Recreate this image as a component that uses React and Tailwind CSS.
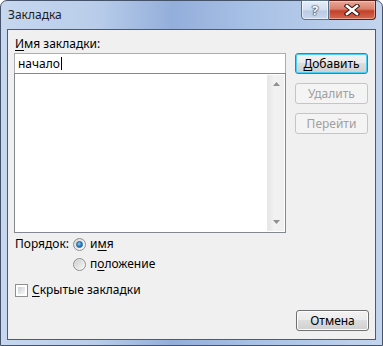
import React from "react";

const font = { fontFamily: '"Noto Sans", "Open Sans", sans-serif' };

function Btn({ children, disabled, primary, className = "" }) {
  let cls =
    "h-[21px] w-[73px] rounded-[3px] border flex items-center justify-center text-[12px] leading-none ";
  if (primary) {
    cls +=
      "border-[#3c7fb1] bg-[linear-gradient(#f2f2f2_0%,#ebebeb_45%,#dddddd_50%,#cfcfcf_100%)] text-black shadow-[inset_0_0_0_1px_#48d0f8]";
  } else if (disabled) {
    cls += "border-[#c5c5c5] bg-[#f4f4f4] text-[#a0a0a0]";
  } else {
    cls +=
      "border-[#707070] bg-[linear-gradient(#f2f2f2_0%,#ebebeb_45%,#dddddd_50%,#cfcfcf_100%)] text-black shadow-[inset_0_0_0_1px_#fcfcfc]";
  }
  return <div className={cls + " " + className}>{children}</div>;
}

function Radio({ checked }) {
  return (
    <div className="w-[13px] h-[13px] rounded-full border border-[#8e8f8f] bg-[linear-gradient(135deg,#d6d6d6,#fefefe)] flex items-center justify-center">
      {checked ? (
        <div className="w-[7px] h-[7px] rounded-full bg-[radial-gradient(circle_at_40%_35%,#8ad2f6_0%,#2a7fc1_55%,#1b5f9a_100%)] border border-[#1e5f96]" />
      ) : (
        <div className="w-[9px] h-[9px] rounded-full bg-[linear-gradient(135deg,#cfcfcf,#f6f6f6)]" />
      )}
    </div>
  );
}

export default function App() {
  return (
    <div style={font} className="w-[383px] h-[346px] overflow-hidden">
      <div className="relative w-[383px] h-[346px] rounded-t-[7px] border border-[#45536a] bg-[linear-gradient(90deg,#c6d7ef_0%,#b9cdea_25%,#93aedb_45%,#a7c0e5_65%,#c3d5ee_100%)] flex flex-col">
        {/* title bar */}
        <div className="h-[28px] flex items-center pl-[7px] text-[12px] text-[#1e1e1e]">
          Закладка
        </div>
        {/* title buttons */}
        <div className="absolute top-[-1px] right-[6px] flex">
          <div className="w-[28px] h-[20px] rounded-bl-[4px] border border-[#5e6f88] bg-[linear-gradient(#e6eef9_0%,#d2def0_50%,#b9cbe5_55%,#c9d8ee_100%)] flex items-center justify-center shadow-[inset_0_0_0_1px_rgba(255,255,255,0.6)]">
            <span className="text-[13px] font-bold text-white leading-none [text-shadow:0_0_1px_#2b3646,0_0_1px_#2b3646,0_0_2px_#2b3646]">
              ?
            </span>
          </div>
          <div className="w-[47px] h-[20px] rounded-br-[4px] border border-l-0 border-[#5a2119] bg-[linear-gradient(#e9a899_0%,#d8806a_45%,#c3402a_55%,#d46a50_100%)] flex items-center justify-center shadow-[inset_0_0_0_1px_rgba(255,220,210,0.5)]">
            <svg width="16" height="12" viewBox="0 0 16 12">
              <path d="M3 2 L13 10 M13 2 L3 10" stroke="#3a1510" strokeWidth="4.6" strokeLinecap="square" />
              <path d="M3 2 L13 10 M13 2 L3 10" stroke="#ffffff" strokeWidth="2.6" strokeLinecap="square" />
            </svg>
          </div>
        </div>
        {/* client */}
        <div className="mx-[6px] h-[311px] border border-[#4e5a6e] bg-[#f0f0f0] flex flex-col px-[6px] text-[12px] text-black">
          <div className="flex">
            <div className="w-[272px] flex flex-col">
              <div className="h-[14px] mt-[7px] mb-[2px] leading-[14px] pl-[1px]">
                <span className="underline underline-offset-2">И</span>мя закладки:
              </div>
              <div className="h-[20px] border border-[#abadb3] border-b-0 bg-white flex items-center pl-[3px] leading-none">
                начало<span className="inline-block w-[1px] h-[13px] bg-black ml-[1px]" />
              </div>
              <div className="h-[160px] border border-[#828790] bg-white flex justify-end p-[1px]">
                <div className="w-[17px] bg-[linear-gradient(90deg,#e6e6e6,#f2f2f2_40%,#efefef)] border-l border-[#e8e8e8] flex flex-col justify-between items-center py-[7px]">
                  <svg width="7" height="4" viewBox="0 0 7 4">
                    <path d="M0 4 L3.5 0 L7 4 Z" fill="#909090" />
                  </svg>
                  <svg width="7" height="4" viewBox="0 0 7 4">
                    <path d="M0 0 L3.5 4 L7 0 Z" fill="#909090" />
                  </svg>
                </div>
              </div>
            </div>
            <div className="ml-[9px] pt-[23px] flex flex-col gap-[9px]">
              <Btn primary>
                <span className="underline underline-offset-2">Д</span>обавить
              </Btn>
              <Btn disabled>Удалить</Btn>
              <Btn disabled>Перейти</Btn>
            </div>
          </div>
          {/* order */}
          <div className="flex mt-[4px] pl-[1px]">
            <div className="w-[58px] h-[14px] leading-[14px]">Порядок:</div>
            <div className="flex flex-col gap-[6px]">
              <div className="flex items-center gap-[4px] h-[14px] leading-[14px]">
                <Radio checked />
                <span>
                  и<span className="underline underline-offset-2">м</span>я
                </span>
              </div>
              <div className="flex items-center gap-[4px] h-[14px] leading-[14px]">
                <Radio />
                <span>
                  п<span className="underline underline-offset-2">о</span>ложение
                </span>
              </div>
            </div>
          </div>
          <div className="flex items-center gap-[4px] mt-[12px] pl-[1px] h-[14px] leading-[14px]">
            <div className="w-[13px] h-[13px] border border-[#8e8f8f] bg-white p-[2px]">
              <div className="w-full h-full bg-[linear-gradient(135deg,#cbcfd5,#f7f7f7)]" />
            </div>
            <span>
              <span className="underline underline-offset-2">С</span>крытые закладки
            </span>
          </div>
          <div className="flex justify-end mt-[13px]">
            <Btn>Отмена</Btn>
          </div>
        </div>
      </div>
    </div>
  );
}
